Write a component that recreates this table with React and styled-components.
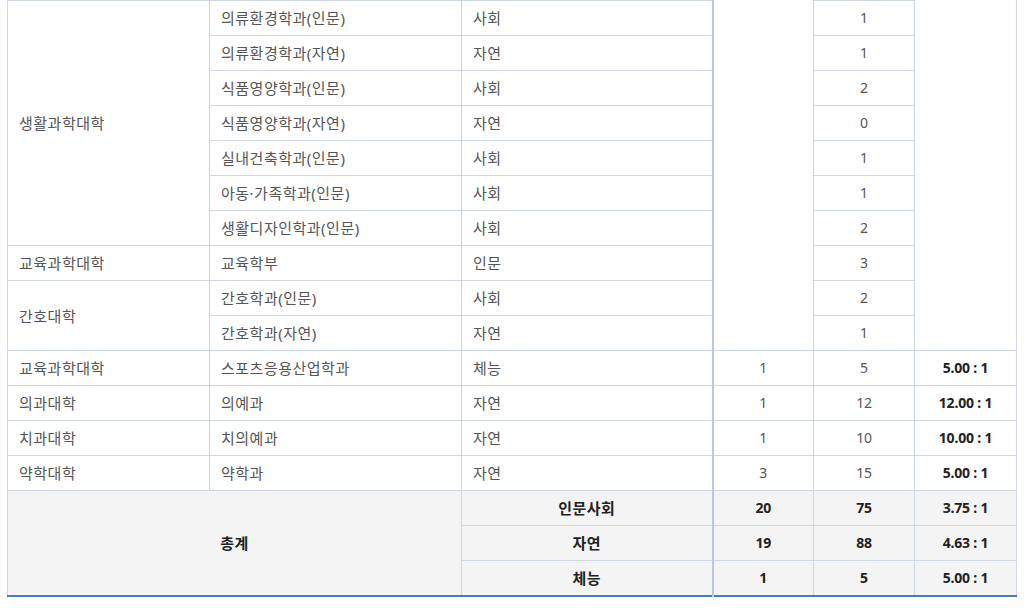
import React from "react";
import styled, { createGlobalStyle } from "styled-components";

const Global = createGlobalStyle`
  html, body { margin: 0; padding: 0; background: #fff; overflow: hidden; }
  body { font-family: "Noto Sans", "Noto Sans CJK KR", sans-serif; }
`;

const Viewport = styled.div`
  width: 1025px;
  height: 608px;
  overflow: hidden;
  padding-left: 7px;
  box-sizing: border-box;
`;

const Table = styled.table`
  width: 1009px;
  margin-top: -35px;
  border-collapse: collapse;
  table-layout: fixed;
  border-left: 1px solid #bcc7de;
  border-right: 1px solid #bcc7de;
  border-bottom: 2px solid #4a7ebb;
  font-family: "Noto Sans", "Noto Sans CJK KR", sans-serif;
  color: #555;
`;

const Row = styled.tr`
  height: 35px;
`;

const Cell = styled.td`
  border: 1px solid #cfd7e5;
  border-right: ${(p) => (p.$split ? "2px solid #b7c9e6" : "1px solid #cfd7e5")};
  padding: 0 11px 1px;
  height: 34px;
  box-sizing: border-box;
  text-align: ${(p) => (p.$center ? "center" : "left")};
  vertical-align: middle;
  font-size: ${(p) => (p.$num ? "14px" : "15px")};
  letter-spacing: ${(p) => (p.$num ? "-0.2px" : "0.5px")};
  font-weight: ${(p) => (p.$bold ? 700 : 400)};
  color: ${(p) => (p.$bold ? "#222" : "#555")};
  background: ${(p) => (p.$total ? "#f4f4f4" : "#fff")};
  white-space: nowrap;
`;

const upper = [
  ["의류환경학과(인문)", "사회", "1"],
  ["의류환경학과(자연)", "자연", "1"],
  ["식품영양학과(인문)", "사회", "2"],
  ["식품영양학과(자연)", "자연", "0"],
  ["실내건축학과(인문)", "사회", "1"],
  ["아동·가족학과(인문)", "사회", "1"],
  ["생활디자인학과(인문)", "사회", "2"],
];

const lower = [
  ["교육과학대학", "스포츠응용산업학과", "체능", "1", "5", "5.00 : 1"],
  ["의과대학", "의예과", "자연", "1", "12", "12.00 : 1"],
  ["치과대학", "치의예과", "자연", "1", "10", "10.00 : 1"],
  ["약학대학", "약학과", "자연", "3", "15", "5.00 : 1"],
];

const totals = [
  ["인문사회", "20", "75", "3.75 : 1"],
  ["자연", "19", "88", "4.63 : 1"],
  ["체능", "1", "5", "5.00 : 1"],
];

export default function App() {
  return (
    <>
      <Global />
      <Viewport>
        <Table>
          <colgroup>
            <col style={{ width: 202 }} />
            <col style={{ width: 252 }} />
            <col style={{ width: 251 }} />
            <col style={{ width: 101 }} />
            <col style={{ width: 101 }} />
            <col style={{ width: 102 }} />
          </colgroup>
          <tbody>
            <Row>
              <Cell />
              <Cell />
              <Cell $split />
              <Cell rowSpan={11} />
              <Cell $center />
              <Cell rowSpan={11} />
            </Row>
            {upper.map((r, i) => (
              <Row key={r[0]}>
                {i === 0 && <Cell rowSpan={7}>생활과학대학</Cell>}
                <Cell>{r[0]}</Cell>
                <Cell $split>{r[1]}</Cell>
                <Cell $center $num>{r[2]}</Cell>
              </Row>
            ))}
            <Row>
              <Cell>교육과학대학</Cell>
              <Cell>교육학부</Cell>
              <Cell $split>인문</Cell>
              <Cell $center $num>3</Cell>
            </Row>
            <Row>
              <Cell rowSpan={2}>간호대학</Cell>
              <Cell>간호학과(인문)</Cell>
              <Cell $split>사회</Cell>
              <Cell $center $num>2</Cell>
            </Row>
            <Row>
              <Cell>간호학과(자연)</Cell>
              <Cell $split>자연</Cell>
              <Cell $center $num>1</Cell>
            </Row>
            {lower.map((r) => (
              <Row key={r[1]}>
                <Cell>{r[0]}</Cell>
                <Cell>{r[1]}</Cell>
                <Cell $split>{r[2]}</Cell>
                <Cell $center $num>{r[3]}</Cell>
                <Cell $center $num>{r[4]}</Cell>
                <Cell $center $num $bold>{r[5]}</Cell>
              </Row>
            ))}
            {totals.map((r, i) => (
              <Row key={r[0]}>
                {i === 0 && (
                  <Cell colSpan={2} rowSpan={3} $center $bold $total>
                    총계
                  </Cell>
                )}
                <Cell $center $bold $total $split>{r[0]}</Cell>
                <Cell $center $num $bold $total>{r[1]}</Cell>
                <Cell $center $num $bold $total>{r[2]}</Cell>
                <Cell $center $num $bold $total>{r[3]}</Cell>
              </Row>
            ))}
          </tbody>
        </Table>
      </Viewport>
    </>
  );
}
